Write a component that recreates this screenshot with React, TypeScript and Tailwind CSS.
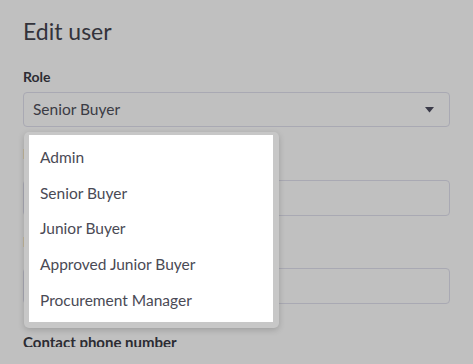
export default function App() {
  const roles = ['Admin', 'Senior Buyer', 'Junior Buyer', 'Approved Junior Buyer', 'Procurement Manager']

  return (
    <div className="relative w-[473px] h-[364px] bg-[#c0c0c0] overflow-hidden" style={{ fontFamily: 'Lato, "Open Sans", sans-serif' }}>
      <div className="h-[347px] overflow-hidden px-[23px] pt-[16px]">
        <h1 className="text-[23px] leading-[30px] text-[#33333b]">Edit user</h1>

        <div className="mt-[22px]">
          <div className="text-[14px] font-bold text-[#2c2c33] leading-[18px]">Role</div>
          <div className="mt-[6px] h-[35px] rounded-[4px] border border-[#a9a9b3] flex items-center justify-between pl-[9px] pr-[15px]">
            <span className="text-[15.5px] text-[#3b3b44]">Senior Buyer</span>
            <svg width="9" height="6" viewBox="0 0 9 6">
              <path d="M0 0h9L4.5 5.5z" fill="#3a3a48" />
            </svg>
          </div>
        </div>

        <div className="mt-[18px]">
          <div className="text-[14px] font-bold text-[#2c2c33] leading-[18px]">Email</div>
          <div className="mt-[17px] h-[36px] rounded-[4px] border border-[#a9a9b3]" />
        </div>

        <div className="mt-[17px]">
          <div className="text-[14px] font-bold text-[#2c2c33] leading-[18px]">Name</div>
          <div className="mt-[17px] h-[36px] rounded-[4px] border border-[#a9a9b3]" />
        </div>

        <div className="mt-[29px]">
          <div className="text-[15px] font-bold text-[#2c2c33] leading-[18px]">Contact phone number</div>
          <div className="mt-[8px] h-[36px] rounded-[4px] border border-[#a9a9b3]" />
        </div>
      </div>

      {/* open menu */}
      <div className="absolute left-[24px] top-[132px] w-[255px] rounded-[5px] bg-[#c7c7c7] pt-[3px] pl-[5px] pr-[6px] pb-[6px] shadow-[0_2px_6px_rgba(0,0,0,0.18)]">
        <ul className="bg-white pt-[5px] pb-[4px]">
          {roles.map((r) => (
            <li key={r} className="h-[35.6px] flex items-center pl-[11px] text-[15.5px] text-[#4a4a55]">
              {r}
            </li>
          ))}
        </ul>
      </div>
    </div>
  )
}
